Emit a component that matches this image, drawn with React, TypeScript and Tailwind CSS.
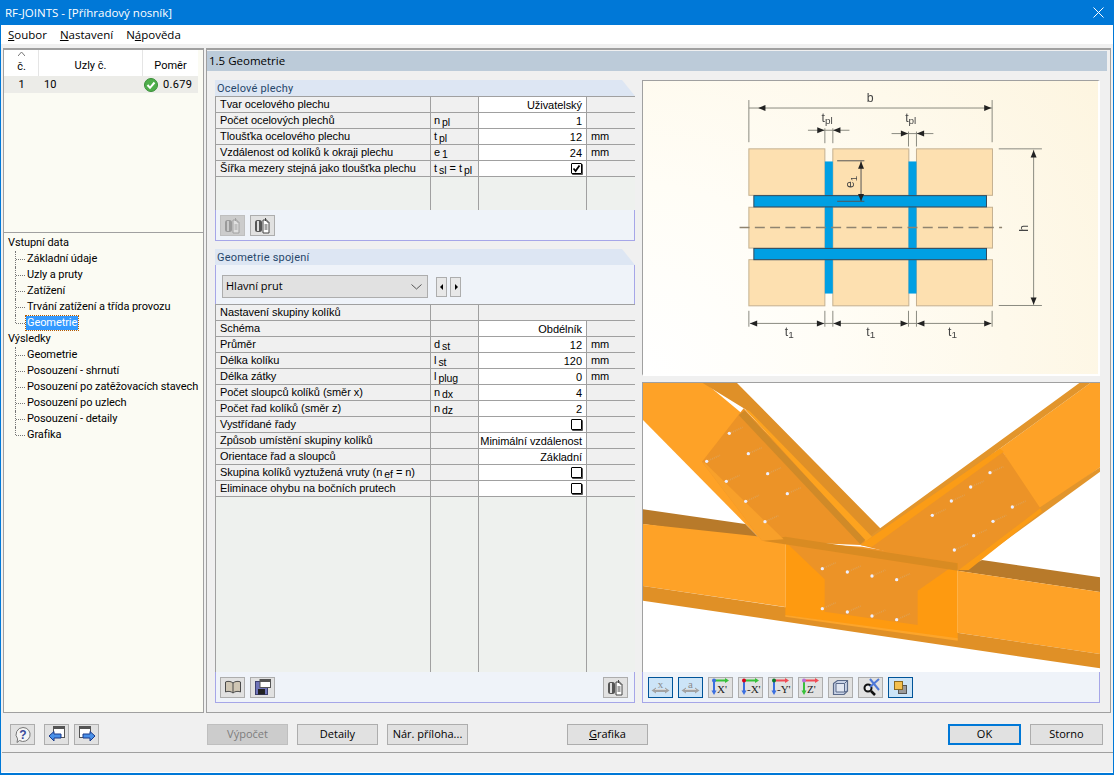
import React from "react";

const seg = "font-['Open_Sans',sans-serif]";
const ar = "font-['Liberation_Sans',sans-serif]";
const rb = "font-['Roboto',sans-serif]";

type Row = { label: React.ReactNode; sym?: [string, string, string?]; val?: string; unit?: string; check?: boolean | "off"; grayVal?: boolean };

function Sub({ t }: { t: string }) {
  return <span className="relative top-[2px] ml-[2px] text-[10.5px]">{t}</span>;
}

function Sym({ s }: { s?: [string, string, string?] }) {
  if (!s) return null;
  return (
    <span>
      {s[0]}
      <Sub t={s[1]} />
      {s[2] ? <span> = t<Sub t="pl" /></span> : null}
    </span>
  );
}

function Check({ on }: { on: boolean }) {
  return (
    <span className="w-[11px] h-[11px] border-[1.5px] border-black rounded-[1px] bg-white flex items-center justify-center shadow-[1px_1px_0_#555]">
      {on && (
        <svg width="9" height="9" viewBox="0 0 9 9">
          <path d="M1.5 4.5 L3.6 7 L7.5 1.5" fill="none" stroke="#000" strokeWidth="1.8" />
        </svg>
      )}
    </span>
  );
}

function GridRow({ r }: { r: Row }) {
  return (
    <div className="flex h-[16px] border-b border-[#a0a0a0] leading-[14px] text-[11px] tracking-[-0.05px] text-black">
      <div className="w-[215px] pl-[4px] bg-[#f0f0f0] border-r border-[#a0a0a0] whitespace-nowrap overflow-hidden">{r.label}</div>
      <div className="w-[48px] pl-[3px] bg-[#f0f0f0] border-r border-[#a0a0a0] whitespace-nowrap"><Sym s={r.sym} /></div>
      {r.grayVal ? (
        <div className="flex-1 bg-[#f0f0f0]" />
      ) : (
        <>
          <div className="w-[108px] pr-[4px] bg-white border-r border-[#a0a0a0] flex justify-end items-center text-right whitespace-nowrap">
            {r.check !== undefined ? <Check on={r.check === true} /> : r.val}
          </div>
          <div className="flex-1 pl-[4px] bg-[#f0f0f0]">{r.unit}</div>
        </>
      )}
    </div>
  );
}

function EmptyCols({ className }: { className: string }) {
  return (
    <div className={`flex bg-[#eef1ee] ${className}`}>
      <div className="w-[215px] border-r border-[#a0a0a0]" />
      <div className="w-[48px] border-r border-[#a0a0a0]" />
      <div className="w-[108px] border-r border-[#a0a0a0]" />
      <div className="flex-1" />
    </div>
  );
}

function GroupHead({ title }: { title: string }) {
  return (
    <div className={`h-[16px] bg-[#dde6f3] [clip-path:polygon(0_0,calc(100%-13px)_0,100%_100%,0_100%)] pl-[2px] text-[11px] leading-[17px] tracking-[0.2px] text-[#27466b] ${rb}`}>
      {title}
    </div>
  );
}

function TB({ sel, disabled, children }: { sel?: boolean; disabled?: boolean; children: React.ReactNode }) {
  return (
    <div
      className={`w-[25px] h-[21px] flex items-center justify-center border ${
        sel ? "bg-[#cce4f7] border-[#005499]" : disabled ? "bg-[#cccccc] border-[#bfbfbf]" : "bg-[#e1e1e1] border-[#adadad]"
      }`}
    >
      {children}
    </div>
  );
}

function Btn({ children, w, disabled, primary }: { children: React.ReactNode; w: string; disabled?: boolean; primary?: boolean }) {
  return (
    <div
      className={`h-[21px] flex items-center justify-center text-[11px] ${seg} ${w} ${
        disabled
          ? "bg-[#cccccc] border border-[#bfbfbf] text-[#7d7d7d]"
          : primary
          ? "bg-[#e1e1e1] border-2 border-[#0078d7] text-black"
          : "bg-[#e1e1e1] border border-[#adadad] text-black"
      }`}
    >
      {children}
    </div>
  );
}

const CopyIcon = ({ faded }: { faded?: boolean }) => (
  <svg width="17" height="17" viewBox="0 0 17 17">
    <rect x="1" y="3" width="7" height="12" rx="2.5" fill={faded ? "#9a9a9a" : "#555"} />
    <rect x="3" y="4" width="2" height="10" fill={faded ? "#c9c9c9" : "#ddd"} />
    <path d="M9 3h4v2h2v11H9z" fill={faded ? "#e0e0e0" : "#fff"} stroke={faded ? "#a0a0a0" : "#444"} />
    <path d="M10.5 8h3M10.5 10h3M10.5 12h3" stroke={faded ? "#a0a0a0" : "#444"} />
    <path d="M11 1h1v3h-1z" fill={faded ? "#a0a0a0" : "#444"} />
  </svg>
);

const Axis = ({ label, x, y, z }: { label: string; x: string; y: string; z: string }) => (
  <svg width="21" height="18" viewBox="0 0 21 18">
    <path d="M4 2.5h13" stroke={x} strokeWidth="2" />
    <path d="M19 2.5l-4-2.5v5z" fill={x} />
    <path d="M4 2v11" stroke={y} strokeWidth="2" />
    <path d="M4 17l-2.5-4.5h5z" fill={y} />
    <circle cx="4" cy="2.5" r="2" fill={z} />
    <text x="7" y="15" fontSize="11" fontFamily="'Liberation Serif',serif" fill="#222">{label}</text>
  </svg>
);

function DimBtn({ t }: { t: string }) {
  return (
    <TB sel>
      <div className="relative w-[19px] h-[17px]">
        <svg width="19" height="17" viewBox="0 0 19 17">
          <path d="M4 11.5h11" stroke="#a3a3a3" strokeWidth="3" />
          <path d="M0.5 11.5L5 8.5V14.5ZM18.5 11.5L14 8.5V14.5Z" fill="#a3a3a3" />
          <path d="M4 10.5h11" stroke="#d8d8d8" />
        </svg>
        <span className="absolute left-0 right-0 top-[-3px] text-center text-[11px] font-['Liberation_Serif',serif] text-[#8a8a8a]">{t}</span>
      </div>
    </TB>
  );
}

const rows1: Row[] = [
  { label: "Tvar ocelového plechu", val: "Uživatelský" },
  { label: "Počet ocelových plechů", sym: ["n", "pl"], val: "1" },
  { label: "Tloušťka ocelového plechu", sym: ["t", "pl"], val: "12", unit: "mm" },
  { label: "Vzdálenost od kolíků k okraji plechu", sym: ["e", "1"], val: "24", unit: "mm" },
  { label: "Šířka mezery stejná jako tloušťka plechu", sym: ["t", "sl", "x"], check: true },
];

const rows2: Row[] = [
  { label: "Nastavení skupiny kolíků", grayVal: true },
  { label: "Schéma", val: "Obdélník" },
  { label: "Průměr", sym: ["d", "st"], val: "12", unit: "mm" },
  { label: "Délka kolíku", sym: ["l", "st"], val: "120", unit: "mm" },
  { label: "Délka zátky", sym: ["l", "plug"], val: "0", unit: "mm" },
  { label: "Počet sloupců kolíků (směr x)", sym: ["n", "dx"], val: "4" },
  { label: "Počet řad kolíků (směr z)", sym: ["n", "dz"], val: "2" },
  { label: "Vystřídané řady", check: "off" },
  { label: "Způsob umístění skupiny kolíků", val: "Minimální vzdálenost" },
  { label: "Orientace řad a sloupců", val: "Základní" },
  { label: <span>Skupina kolíků vyztužená vruty (n<Sub t="ef" /> = n)</span>, check: "off" },
  { label: "Eliminace ohybu na bočních prutech", check: "off" },
];

const tree: [string, boolean][] = [
  ["Základní údaje", false],
  ["Uzly a pruty", false],
  ["Zatížení", false],
  ["Trvání zatížení a třída provozu", false],
  ["Geometrie", true],
];
const tree2 = ["Geometrie", "Posouzení - shrnutí", "Posouzení po zatěžovacích stavech", "Posouzení po uzlech", "Posouzení - detaily", "Grafika"];

function TreeItem({ label, sel, last }: { label: string; sel?: boolean; last?: boolean }) {
  return (
    <div className="relative h-[16px] pl-[22px] flex items-center whitespace-nowrap">
      <span className={`absolute left-[11px] top-0 border-l border-dotted border-[#777] ${last ? "h-[8px]" : "h-[16px]"}`} />
      <span className="absolute left-[12px] top-[8px] w-[9px] border-t border-dotted border-[#777]" />
      <span className={sel ? "bg-[#3399ff] text-white px-[1px] outline-1 outline-dotted outline-[#b35a00] leading-[14px] h-[14px]" : "px-[1px]"}>{label}</span>
    </div>
  );
}

function Drawing() {
  const g = "#8a8a80";
  const wood = "#fde0b0";
  const arrow = (x: number, y: number, dx: number, dy: number, k: string) => {
    const s = 22, w = 9;
    const px = -dy, py = dx;
    return <path key={k} d={`M${x} ${y}L${x - dx * s + px * w} ${y - dy * s + py * w}L${x - dx * s - px * w} ${y - dy * s - py * w}Z`} fill="#222" />;
  };
  const woods = [
    [322, 222, 229, 140], [575, 222, 229, 140], [827, 222, 229, 140],
    [322, 398, 229, 123], [575, 398, 229, 123], [827, 398, 229, 123],
    [322, 556, 229, 139], [575, 556, 229, 139], [827, 556, 229, 139],
  ];
  const T = (x: number, y: number, t: string, sub?: string) => (
    <text x={x} y={y} fontSize="37" fontFamily="'Liberation Sans',sans-serif" fill="#444">
      {t}
      {sub && <tspan dy="7" fontSize="30">{sub}</tspan>}
    </text>
  );
  return (
    <svg className="block w-full h-full blur-[0.3px]" viewBox="3 18 1371 882">
      <g stroke="#c4b090" strokeWidth="3" fill={wood}>
        {woods.map((w, i) => <rect key={i} x={w[0]} y={w[1]} width={w[2]} height={w[3]} />)}
      </g>
      <rect x="551" y="260" width="24" height="398" fill="#009fe3" />
      <rect x="803" y="260" width="24" height="398" fill="#009fe3" />
      <rect x="337" y="363" width="701" height="34" fill="#009fe3" stroke="#34495a" strokeWidth="3" />
      <rect x="337" y="522" width="701" height="34" fill="#009fe3" stroke="#34495a" strokeWidth="3" />
      <g stroke={g} strokeWidth="3" fill="none">
        <path d="M322 75V202M1055 75V202M322 99H1055" />
        <path d="M551 160V205M575 160V205M803 170V215M827 170V215" />
        <path d="M500 166H625M752 176H878" />
        <path d="M1075 222H1205M1075 694H1205M1180 225V692" />
        <path d="M322 710V758M551 710V758M575 710V758M803 710V758M827 710V758M1055 710V758M325 748H1053" />
        <path d="M588 258H670M588 380H670M660 260V380" stroke="#555" />
      </g>
      <path d="M294 459H1085" stroke="#8f8470" strokeWidth="4" strokeDasharray="30 16" fill="none" />
      {arrow(350, 99, -1, 0, "a")}{arrow(1053, 99, 1, 0, "b")}
      {arrow(550, 166, 1, 0, "c")}{arrow(576, 166, -1, 0, "d")}
      {arrow(802, 176, 1, 0, "e")}{arrow(828, 176, -1, 0, "f")}
      {arrow(1180, 226, 0, -1, "g")}{arrow(1180, 692, 0, 1, "h")}
      {arrow(660, 260, 0, -1, "i")}{arrow(660, 380, 0, 1, "j")}
      {[[325, -1], [549, 1], [577, -1], [801, 1], [829, -1], [1053, 1]].map(([x, d], i) => arrow(x, 748, d, 0, "k" + i))}
      {T(677, 80, "b")}
      {T(541, 140, "t", "pl")}
      {T(793, 140, "t", "pl")}
      {T(430, 786, "t", "1")}
      {T(676, 786, "t", "1")}
      {T(922, 786, "t", "1")}
      <text transform="translate(640 340) rotate(-90)" fontSize="37" fontFamily="'Liberation Sans',sans-serif" fill="#444">e<tspan dy="7" fontSize="30">1</tspan></text>
      <text transform="translate(1162 472) rotate(-90)" fontSize="37" fontFamily="'Liberation Sans',sans-serif" fill="#444">h</text>
    </svg>
  );
}

function Render3D() {
  const dots: [number, number][] = [
    [262, 160], [319, 221], [377, 281], [436, 341], [194, 244], [253, 304], [311, 364], [369, 425],
    [1044, 278], [986, 321], [928, 363], [871, 406], [1111, 381], [1053, 424], [995, 467], [937, 510],
    [541, 566], [616, 576], [690, 588], [764, 599], [541, 686], [616, 696], [690, 708], [764, 719],
  ];
  return (
    <svg className="block w-full h-full" viewBox="3 9 1371 867">
      <rect x="3" y="9" width="1371" height="867" fill="#fff" />
      {/* left diagonal */}
      <polygon points="3,9 190,9 720,450 360,482 3,120" fill="#fea227" />
      <polygon points="182,9 285,9 722,452 720,490 680,480 310,88" fill="#df9028" />
      {/* right diagonal */}
      <polygon points="1345,9 1374,9 1374,262 1190,395 1075,205" fill="#fea227" />
      <polygon points="1312,9 1345,9 1075,205 1060,215 700,500 655,495 700,455" fill="#e2952c" />
      <polygon points="1374,262 1374,275 970,570 945,570 1190,385" fill="#e2952c" />
      {/* horizontal beam */}
      <polygon points="3,388 3,432 360,482 310,432" fill="#b87a2a" />
      <polygon points="1020,540 1374,592 1374,636 945,572" fill="#b87a2a" />
      <polygon points="3,432 430,478 430,681 3,618" fill="#fea227" />
      <polygon points="947,572 1374,636 1374,822 947,758" fill="#fea227" />
      <polygon points="3,618 3,662 1374,865 1374,822" fill="#e09026" />
      {/* plates */}
      <polygon points="180,245 305,85 680,480 655,495 360,482" fill="#ec9327" />
      <polygon points="655,495 1075,205 1195,385 950,570" fill="#ec9327" />
      <polygon points="430,478 947,550 947,780 430,705" fill="#fe9a10" />
      <polygon points="430,485 548,598 548,695 827,735 827,632 947,548 660,500" fill="#ec9327" />
      <polygon points="360,482 947,572 947,550 430,470" fill="#d98b22" />
      {/* edges */}
      <polygon points="310,88 322,92 690,470 670,485" fill="#fda31f" />
      <polygon points="290,105 308,92 670,480 655,493" fill="#d08a28" />
      <polygon points="655,495 1075,205 1085,215 690,500" fill="#fb9c16" />
      <polygon points="1195,385 1200,395 980,570 950,570" fill="#fb9c16" />
      <polygon points="180,245 190,250 425,478 360,482" fill="#f8a02a" />
      <polygon points="430,705 947,775 947,782 430,710" fill="#fda52a" />
      {dots.map(([x, y], i) => (
        <g key={i}>
          <path d={`M${x} ${y}L${x + 40} ${y - 18}`} stroke="#e0a050" strokeWidth="5" strokeDasharray="3 3" />
          <circle cx={x} cy={y} r="5" fill="#eef0ff" />
        </g>
      ))}
    </svg>
  );
}

export default function App() {
  return (
    <div className={`w-[1114px] h-[775px] flex flex-col bg-[#f0f0f0] border-x border-b-2 border-[#0078d7] overflow-hidden ${seg}`}>
      {/* title bar */}
      <div className="h-[25px] shrink-0 -mx-[1px] bg-[#0078d7] text-white text-[11.5px] flex items-center pl-[5px] pr-[10px] justify-between">
        <span>RF-JOINTS - [Příhradový nosník]</span>
        <svg width="11" height="11" viewBox="0 0 11 11"><path d="M0.5 0.5L10.5 10.5M10.5 0.5L0.5 10.5" stroke="#fff" /></svg>
      </div>
      {/* menu */}
      <div className="h-[19px] shrink-0 bg-white text-[11.5px] text-black flex items-center pl-[7px] gap-[13px]">
        <span><u>S</u>oubor</span>
        <span><u>N</u>astavení</span>
        <span>N<u>á</u>pověda</span>
      </div>
      {/* main */}
      <div className="flex-1 min-h-0 flex pt-[4px] pl-[2px] pr-[2px] gap-[2px]">
        {/* left */}
        <div className={`w-[201px] flex flex-col border border-[#a0a0a0] border-t-2 bg-[#fbfbf3] ${rb}`}>
          <div className="h-[183px] shrink-0 border-b border-[#a0a0a0] text-[11px] text-black">
            <div className="h-[26px] flex bg-white mr-[5px]">
              <div className="w-[34px] ml-[1px] border-r border-[#e5e5e5] flex flex-col items-center relative pt-[9px]">
                <svg className="absolute top-[2px]" width="7" height="4" viewBox="0 0 7 4"><path d="M0 4L3.5 0L7 4" fill="none" stroke="#777" /></svg>
                č.
              </div>
              <div className="w-[104px] border-r border-[#e5e5e5] text-center pt-[8px]">Uzly č.</div>
              <div className="flex-1 text-center pt-[8px]">Poměr</div>
            </div>
            <div className="h-[17px] bg-[#ecece8] mr-[5px] pt-[1px] flex items-center">
              <div className="w-[35px] text-center">1</div>
              <div className="w-[105px] pl-[5px]">10</div>
              <div className="flex items-center gap-[5px]">
                <svg width="14" height="14" viewBox="0 0 14 14">
                  <circle cx="7" cy="7" r="6.5" fill="#4fae4b" stroke="#3b8d3a" />
                  <path d="M3.5 7L6 9.8L10.5 4.5" fill="none" stroke="#fff" strokeWidth="2" />
                </svg>
                <span className="tracking-[0.3px]">0.679</span>
              </div>
            </div>
          </div>
          <div className="flex-1 pt-[2px] text-black text-[11px] tracking-[-0.08px]">
            <div className="h-[16px] pl-[4px] flex items-center">Vstupní data</div>
            {tree.map((t, i) => <TreeItem key={i} label={t[0]} sel={t[1]} last={i === tree.length - 1} />)}
            <div className="h-[16px] pl-[4px] flex items-center">Výsledky</div>
            {tree2.map((t, i) => <TreeItem key={i} label={t} last={i === tree2.length - 1} />)}
          </div>
        </div>
        {/* right */}
        <div className="flex-1 flex flex-col border border-[#a0a0a0] border-t-2 border-b bg-[#f0f0f0] pt-[1px]">
          <div className="h-[20px] mr-[3px] shrink-0 bg-[#bccbd9] text-[11.5px] leading-[19px] pl-[2px] text-black">1.5 Geometrie</div>
          <div className="flex-1 min-h-0 flex pt-[9px] pl-[8px] pb-[9px]">
            {/* forms */}
            <div className={`w-[420px] shrink-0 flex flex-col ${ar}`}>
              <GroupHead title="Ocelové plechy" />
              <div className="border-l border-t border-[#a0a0a0]">
                {rows1.map((r, i) => <GridRow key={i} r={r} />)}
                <EmptyCols className="h-[33px]" />
              </div>
              <div className="h-[31px] bg-[#eff3f9] border-l border-r border-b border-[#a6a6e8] flex items-center pl-[4px] gap-[5px] shrink-0">
                <TB disabled><CopyIcon faded /></TB>
                <TB><CopyIcon /></TB>
              </div>
              <div className="h-[8px] shrink-0" />
              <GroupHead title="Geometrie spojení" />
              <div className="h-[39px] shrink-0 bg-[#eff3f9] flex items-center pt-[4px] pl-[6px] border-l border-r border-[#a6a6e8]">
                <div className={`w-[206px] h-[23px] bg-[#e1e1e1] border border-[#adadad] flex items-center justify-between pl-[3px] pr-[5px] text-[11px] text-black ${seg}`}>
                  Hlavní prut
                  <svg width="11" height="6" viewBox="0 0 11 6"><path d="M0.5 0.5L5.5 5L10.5 0.5" fill="none" stroke="#555" /></svg>
                </div>
                <div className="ml-[8px] flex gap-[3px]">
                  {["M6 2L3 5L6 8Z", "M4 2L7 5L4 8Z"].map((d, i) => (
                    <div key={i} className="w-[11px] h-[20px] bg-[#e8e8e8] border border-[#adadad] flex items-center justify-center">
                      <svg width="9" height="10" viewBox="0 0 9 10"><path d={d} fill="#000" /></svg>
                    </div>
                  ))}
                </div>
              </div>
              <div className="flex-1 min-h-0 flex flex-col border-l border-t border-[#a0a0a0]">
                {rows2.map((r, i) => <GridRow key={i} r={r} />)}
                <EmptyCols className="flex-1" />
              </div>
              <div className="h-[31px] bg-[#eff3f9] border-l border-r border-b border-[#a6a6e8] flex items-center pl-[4px] pr-[6px] gap-[5px] shrink-0">
                <TB>
                  <svg width="18" height="14" viewBox="0 0 18 14">
                    <path d="M9 3C7 1 3 1 1.5 2V12C3 11 7 11 9 13C11 11 15 11 16.5 12V2C15 1 11 1 9 3Z" fill="#cfc6b4" stroke="#4a4a4a" />
                    <path d="M9 3V13" stroke="#4a4a4a" />
                  </svg>
                </TB>
                <TB>
                  <svg width="16" height="16" viewBox="0 0 16 16">
                    <rect x="0.5" y="2.5" width="12" height="13" fill="#6f74b8" stroke="#3c3f70" />
                    <rect x="3" y="10" width="7" height="5.5" fill="#222" />
                    <rect x="5" y="0.5" width="10.5" height="8" fill="#fff" stroke="#555" />
                    <rect x="5" y="0.5" width="10.5" height="2.5" fill="#555" />
                  </svg>
                </TB>
                <div className="ml-auto"><TB><CopyIcon /></TB></div>
              </div>
            </div>
            {/* images */}
            <div className="w-[458px] ml-[7px] shrink-0 flex flex-col">
              <div className="h-[296px] shrink-0 border-t border-l border-[#a0a0a0] bg-[radial-gradient(circle_at_0%_100%,#ffffff_0%,#fffdf6_35%,#fdf5e0_100%)] border-r-2 border-b-2 border-r-white border-b-white overflow-hidden">
                <Drawing />
              </div>
              <div className="h-[6px] shrink-0" />
              <div className="flex-1 min-h-0 border-t border-l border-[#a0a0a0] bg-white">
                <Render3D />
              </div>
              <div className="h-[31px] shrink-0 bg-[#eff3f9] border-l border-r border-b border-[#a6a6e8] flex items-center pl-[5px] gap-[5px]">
                <DimBtn t="x" />
                <DimBtn t="a" />
                <TB><Axis label="X'" x="#38c13a" y="#3a6ee0" z="#3a6ee0" /></TB>
                <TB><Axis label="-X'" x="#38c13a" y="#3a6ee0" z="#d8001a" /></TB>
                <TB><Axis label="-Y'" x="#f04b55" y="#3a6ee0" z="#0b7a2a" /></TB>
                <TB><Axis label="Z'" x="#f04b55" y="#38c13a" z="#b86fd8" /></TB>
                <TB>
                  <svg width="17" height="17" viewBox="0 0 17 17">
                    <path d="M1.5 4.5L5.5 1.5H15.5V12L12 15.5H1.5Z" fill="#c8d2e6" stroke="#5a6a8a" strokeWidth="1.2" />
                    <path d="M4 4.5H12.5V13H4ZM12.5 4.5L15.5 1.5M12.5 13L15.5 12" fill="#e2e7f2" stroke="#5a6a8a" />
                  </svg>
                </TB>
                <TB>
                  <svg width="20" height="18" viewBox="0 0 20 18">
                    <circle cx="7" cy="10" r="3.5" fill="#eee" stroke="#111" strokeWidth="2" />
                    <path d="M10 13L14 17" stroke="#111" strokeWidth="2.5" />
                    <path d="M9 1L18 12M18 1L9 9" stroke="#4d78d8" strokeWidth="2" />
                  </svg>
                </TB>
                <TB sel>
                  <svg width="17" height="17" viewBox="0 0 17 17">
                    <rect x="6.5" y="6.5" width="8" height="8" fill="#9a9a9a" stroke="#555" />
                    <rect x="2.5" y="2.5" width="8" height="8" fill="#f4c04e" stroke="#8a6a20" />
                  </svg>
                </TB>
              </div>
            </div>
          </div>
        </div>
      </div>
      {/* bottom buttons */}
      <div className="h-[39px] shrink-0 flex items-center pt-[4px] pl-[9px] pr-[10px]">
        <TB>
          <svg width="18" height="18" viewBox="0 0 18 18">
            <path d="M9 1.5a7 7 0 1 1-3.5 13L3 16.5l.6-3.6A7 7 0 0 1 9 1.5Z" fill="#f4f4f4" stroke="#777" />
            <text x="9" y="13" textAnchor="middle" fontSize="12" fontWeight="700" fontFamily="'Liberation Sans',sans-serif" fill="#3a4a9a">?</text>
          </svg>
        </TB>
        <div className="w-[9px]" />
        <TB>
          <svg width="18" height="17" viewBox="0 0 18 17">
            <rect x="5.5" y="0.5" width="11" height="11" fill="#fff" stroke="#555" />
            <rect x="5.5" y="0.5" width="11" height="2.5" fill="#555" />
            <path d="M1 10L6 5.5V8H13V12H6V15Z" fill="#4a90e8" stroke="#1a3a8a" />
          </svg>
        </TB>
        <div className="w-[5px]" />
        <TB>
          <svg width="18" height="17" viewBox="0 0 18 17">
            <rect x="1.5" y="0.5" width="11" height="11" fill="#fff" stroke="#555" />
            <rect x="1.5" y="0.5" width="11" height="2.5" fill="#555" />
            <path d="M17 10L12 5.5V8H5V12H12V15Z" fill="#4a90e8" stroke="#1a3a8a" />
          </svg>
        </TB>
        <div className="w-[108px]" />
        <Btn w="w-[81px]" disabled>Výpočet</Btn>
        <div className="w-[9px]" />
        <Btn w="w-[81px]">Detaily</Btn>
        <div className="w-[9px]" />
        <Btn w="w-[81px]">Nár. příloha...</Btn>
        <div className="w-[99px]" />
        <Btn w="w-[81px]"><span><u>G</u>rafika</span></Btn>
        <div className="flex-1" />
        <Btn w="w-[73px]" primary>OK</Btn>
        <div className="w-[9px]" />
        <Btn w="w-[73px]">Storno</Btn>
      </div>
      {/* status */}
      <div className="h-[21px] shrink-0 border-t border-[#a0a0a0] ml-[1px] border-b border-b-white" />
    </div>
  );
}
